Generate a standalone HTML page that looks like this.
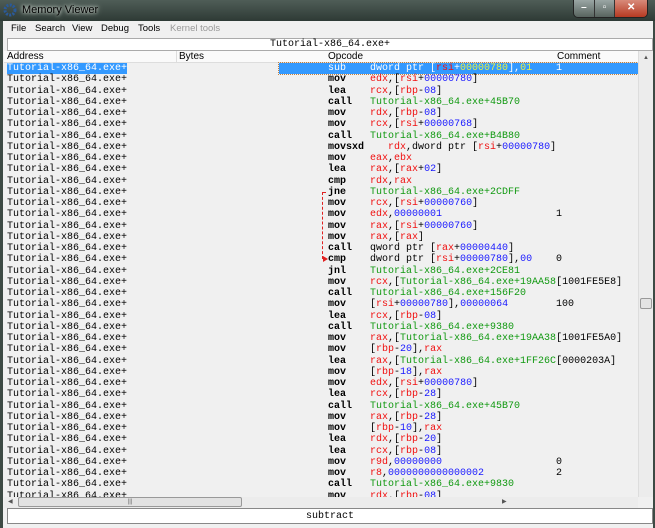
<!DOCTYPE html>
<html><head><meta charset="utf-8"><style>
*{margin:0;padding:0;box-sizing:border-box}
body{width:655px;height:528px;overflow:hidden;background:#3d4a44;font-family:"Liberation Sans",sans-serif;position:relative}
.title{position:absolute;left:0;top:0;width:655px;height:21px;background:linear-gradient(#4f5d57,#2e3a35);}
.title .t{position:absolute;left:22px;top:4px;font-size:11px;color:#000;text-shadow:0 0 6px #cfd8d0,0 0 3px #e8efe8}
.btns{position:absolute;left:573px;top:0;width:75px;height:18px;border:1px solid #222;border-top:none;border-radius:0 0 5px 5px;display:flex;overflow:hidden}
.btns div{flex:1;background:linear-gradient(#9aa6a4,#58645f);border-right:1px solid #333;color:#fff;font-size:10px;text-align:center;line-height:16px;font-weight:bold}
.btns div.x{flex:1.6;background:linear-gradient(#d88a7a,#b63a22);border:none}
.win{position:absolute;left:3px;top:21px;width:650px;height:507px;background:#f0f0f0}
.menu{position:absolute;left:0;top:0;width:650px;height:16px;background:#f0f0f0;font-size:9.5px;line-height:16px}
.menu span{position:absolute;top:0}
.tb{position:absolute;left:4px;top:17px;width:646px;height:13px;background:#fff;border:1px solid #aaa;font:10px "Liberation Mono",monospace;text-align:center;line-height:12px}
.list{position:absolute;left:1px;top:30px;width:634px;height:446px;background:#f0f0f0;overflow:hidden;font:10px/11.25px "Liberation Mono",monospace}
.hdr{position:absolute;left:0;top:0;width:634px;height:12px;background:#fafafa;border-bottom:1px solid #ddd;font-family:"Liberation Sans",sans-serif;font-size:10px;line-height:11px}
.hdr span{position:absolute;top:0}
.row{position:absolute;left:0;height:11.25px;width:634px;white-space:pre}
.a{position:absolute;left:3px}
.m{position:absolute;left:324px;font-weight:bold}
.o{position:absolute;left:366px}
.c{position:absolute;left:552px}
.r{color:#f01010}.n{color:#1818ff}.g{color:#119911}
.sel .a{background:#3399ff;color:#fff}
.selbar{position:absolute;left:275px;top:0;width:359px;height:11px;background:#3399ff;outline:1px dotted #c08040}
.sel .m,.sel .o,.sel .c{color:#fff}
.sel .r{color:#f01010}.sel .y{color:#e8f040}
.vs{position:absolute;left:635px;top:30px;width:15px;height:446px;background:#ececec;border-left:1px solid #ddd}
.hs{position:absolute;left:1px;top:476px;width:634px;height:11px;background:#ececec}
.bot{position:absolute;left:4px;top:487px;width:646px;height:16px;background:#fff;border:1px solid #888;font:10px "Liberation Mono",monospace;text-align:center;line-height:15px}
</style></head><body>
<div class="title"><svg style="position:absolute;left:3px;top:3px" width="14" height="14" viewBox="0 0 14 14"><circle cx="7" cy="7" r="5" fill="none" stroke="#2a5a9a" stroke-width="3" stroke-dasharray="2 1.3"/></svg><span class="t">Memory Viewer</span>
<div class="btns"><div>–</div><div>▫</div><div class="x">✕</div></div></div>
<div class="win">
<div class="menu"><span style="left:8px">File</span><span style="left:32px">Search</span><span style="left:69px">View</span><span style="left:98px">Debug</span><span style="left:135px">Tools</span><span style="left:167px;color:#999">Kernel tools</span></div>
<div class="tb">Tutorial-x86_64.exe+</div>
<div class="list">
<div class="hdr"><span style="left:3px">Address</span><span style="left:175px">Bytes</span><span style="left:172px;top:0;width:1px;height:12px;background:#ddd"></span><span style="left:324px">Opcode</span><span style="left:553px">Comment</span></div>
<div class="row sel" style="top:12px"><div class="selbar"></div><span class="a">Tutorial-x86_64.exe+</span><span class="m" style="font-weight:normal">sub</span><span class="o">dword ptr [<span class="r">rsi</span>+<span class="y">00000780</span>],<span class="y">01</span></span><span class="c">1</span></div>
<div class="row" style="top:23.25px"><span class="a">Tutorial-x86_64.exe+</span><span class="m">mov</span><span class="o"><span class="r">edx</span>,[<span class="r">rsi</span>+<span class="n">00000780</span>]</span></div>
<div class="row" style="top:34.5px"><span class="a">Tutorial-x86_64.exe+</span><span class="m">lea</span><span class="o"><span class="r">rcx</span>,[<span class="r">rbp</span>-<span class="n">08</span>]</span></div>
<div class="row" style="top:45.75px"><span class="a">Tutorial-x86_64.exe+</span><span class="m">call</span><span class="o g">Tutorial-x86_64.exe+45B70</span></div>
<div class="row" style="top:57px"><span class="a">Tutorial-x86_64.exe+</span><span class="m">mov</span><span class="o"><span class="r">rdx</span>,[<span class="r">rbp</span>-<span class="n">08</span>]</span></div>
<div class="row" style="top:68.25px"><span class="a">Tutorial-x86_64.exe+</span><span class="m">mov</span><span class="o"><span class="r">rcx</span>,[<span class="r">rsi</span>+<span class="n">00000768</span>]</span></div>
<div class="row" style="top:79.5px"><span class="a">Tutorial-x86_64.exe+</span><span class="m">call</span><span class="o g">Tutorial-x86_64.exe+B4B80</span></div>
<div class="row" style="top:90.75px"><span class="a">Tutorial-x86_64.exe+</span><span class="m">movsxd</span><span class="o" style="left:384px"><span class="r">rdx</span>,dword ptr [<span class="r">rsi</span>+<span class="n">00000780</span>]</span></div>
<div class="row" style="top:102px"><span class="a">Tutorial-x86_64.exe+</span><span class="m">mov</span><span class="o"><span class="r">eax</span>,<span class="r">ebx</span></span></div>
<div class="row" style="top:113.25px"><span class="a">Tutorial-x86_64.exe+</span><span class="m">lea</span><span class="o"><span class="r">rax</span>,[<span class="r">rax</span>+<span class="n">02</span>]</span></div>
<div class="row" style="top:124.5px"><span class="a">Tutorial-x86_64.exe+</span><span class="m">cmp</span><span class="o"><span class="r">rdx</span>,<span class="r">rax</span></span></div>
<div class="row" style="top:135.75px"><span class="a">Tutorial-x86_64.exe+</span><span class="m">jne</span><span class="o g">Tutorial-x86_64.exe+2CDFF</span></div>
<div class="row" style="top:147px"><span class="a">Tutorial-x86_64.exe+</span><span class="m">mov</span><span class="o"><span class="r">rcx</span>,[<span class="r">rsi</span>+<span class="n">00000760</span>]</span></div>
<div class="row" style="top:158.25px"><span class="a">Tutorial-x86_64.exe+</span><span class="m">mov</span><span class="o"><span class="r">edx</span>,<span class="n">00000001</span></span><span class="c">1</span></div>
<div class="row" style="top:169.5px"><span class="a">Tutorial-x86_64.exe+</span><span class="m">mov</span><span class="o"><span class="r">rax</span>,[<span class="r">rsi</span>+<span class="n">00000760</span>]</span></div>
<div class="row" style="top:180.75px"><span class="a">Tutorial-x86_64.exe+</span><span class="m">mov</span><span class="o"><span class="r">rax</span>,[<span class="r">rax</span>]</span></div>
<div class="row" style="top:192px"><span class="a">Tutorial-x86_64.exe+</span><span class="m">call</span><span class="o">qword ptr [<span class="r">rax</span>+<span class="n">00000440</span>]</span></div>
<div class="row" style="top:203.25px"><span class="a">Tutorial-x86_64.exe+</span><span class="m">cmp</span><span class="o">dword ptr [<span class="r">rsi</span>+<span class="n">00000780</span>],<span class="n">00</span></span><span class="c">0</span></div>
<div class="row" style="top:214.5px"><span class="a">Tutorial-x86_64.exe+</span><span class="m">jnl</span><span class="o g">Tutorial-x86_64.exe+2CE81</span></div>
<div class="row" style="top:225.75px"><span class="a">Tutorial-x86_64.exe+</span><span class="m">mov</span><span class="o"><span class="r">rcx</span>,[<span class="g">Tutorial-x86_64.exe+19AA58</span>[1001FE5E8]</span></div>
<div class="row" style="top:237px"><span class="a">Tutorial-x86_64.exe+</span><span class="m">call</span><span class="o g">Tutorial-x86_64.exe+156F20</span></div>
<div class="row" style="top:248.25px"><span class="a">Tutorial-x86_64.exe+</span><span class="m">mov</span><span class="o">[<span class="r">rsi</span>+<span class="n">00000780</span>],<span class="n">00000064</span></span><span class="c">100</span></div>
<div class="row" style="top:259.5px"><span class="a">Tutorial-x86_64.exe+</span><span class="m">lea</span><span class="o"><span class="r">rcx</span>,[<span class="r">rbp</span>-<span class="n">08</span>]</span></div>
<div class="row" style="top:270.75px"><span class="a">Tutorial-x86_64.exe+</span><span class="m">call</span><span class="o g">Tutorial-x86_64.exe+9380</span></div>
<div class="row" style="top:282px"><span class="a">Tutorial-x86_64.exe+</span><span class="m">mov</span><span class="o"><span class="r">rax</span>,[<span class="g">Tutorial-x86_64.exe+19AA38</span>[1001FE5A0]</span></div>
<div class="row" style="top:293.25px"><span class="a">Tutorial-x86_64.exe+</span><span class="m">mov</span><span class="o">[<span class="r">rbp</span>-<span class="n">20</span>],<span class="r">rax</span></span></div>
<div class="row" style="top:304.5px"><span class="a">Tutorial-x86_64.exe+</span><span class="m">lea</span><span class="o"><span class="r">rax</span>,[<span class="g">Tutorial-x86_64.exe+1FF26C</span>[0000203A]</span></div>
<div class="row" style="top:315.75px"><span class="a">Tutorial-x86_64.exe+</span><span class="m">mov</span><span class="o">[<span class="r">rbp</span>-<span class="n">18</span>],<span class="r">rax</span></span></div>
<div class="row" style="top:327px"><span class="a">Tutorial-x86_64.exe+</span><span class="m">mov</span><span class="o"><span class="r">edx</span>,[<span class="r">rsi</span>+<span class="n">00000780</span>]</span></div>
<div class="row" style="top:338.25px"><span class="a">Tutorial-x86_64.exe+</span><span class="m">lea</span><span class="o"><span class="r">rcx</span>,[<span class="r">rbp</span>-<span class="n">28</span>]</span></div>
<div class="row" style="top:349.5px"><span class="a">Tutorial-x86_64.exe+</span><span class="m">call</span><span class="o g">Tutorial-x86_64.exe+45B70</span></div>
<div class="row" style="top:360.75px"><span class="a">Tutorial-x86_64.exe+</span><span class="m">mov</span><span class="o"><span class="r">rax</span>,[<span class="r">rbp</span>-<span class="n">28</span>]</span></div>
<div class="row" style="top:372px"><span class="a">Tutorial-x86_64.exe+</span><span class="m">mov</span><span class="o">[<span class="r">rbp</span>-<span class="n">10</span>],<span class="r">rax</span></span></div>
<div class="row" style="top:383.25px"><span class="a">Tutorial-x86_64.exe+</span><span class="m">lea</span><span class="o"><span class="r">rdx</span>,[<span class="r">rbp</span>-<span class="n">20</span>]</span></div>
<div class="row" style="top:394.5px"><span class="a">Tutorial-x86_64.exe+</span><span class="m">lea</span><span class="o"><span class="r">rcx</span>,[<span class="r">rbp</span>-<span class="n">08</span>]</span></div>
<div class="row" style="top:405.75px"><span class="a">Tutorial-x86_64.exe+</span><span class="m">mov</span><span class="o"><span class="r">r9d</span>,<span class="n">00000000</span></span><span class="c">0</span></div>
<div class="row" style="top:417px"><span class="a">Tutorial-x86_64.exe+</span><span class="m">mov</span><span class="o"><span class="r">r8</span>,<span class="n">0000000000000002</span></span><span class="c">2</span></div>
<div class="row" style="top:428.25px"><span class="a">Tutorial-x86_64.exe+</span><span class="m">call</span><span class="o g">Tutorial-x86_64.exe+9830</span></div>
<div class="row" style="top:439.5px"><span class="a">Tutorial-x86_64.exe+</span><span class="m">mov</span><span class="o"><span class="r">rdx</span>,[<span class="r">rbp</span>-<span class="n">08</span>]</span></div>
<div style="position:absolute;left:318px;top:141px;width:4px;height:67px;border-left:1px dashed #e02020;border-top:1px dashed #e02020"></div>
<div style="position:absolute;left:319px;top:205px;width:0;height:0;border-left:5px solid #e02020;border-top:3px solid transparent;border-bottom:3px solid transparent"></div>
</div>
<div class="vs"><div style="position:absolute;left:4px;top:4px;font-size:6px;color:#555">▲</div><div style="position:absolute;left:1px;top:247px;width:12px;height:11px;background:#e4e4e4;border:1px solid #999;border-radius:2px"></div></div>
<div class="hs"><div style="position:absolute;left:4px;top:0;font-size:6px;color:#555;line-height:11px">◀</div><div style="position:absolute;left:14px;top:0;width:224px;height:10px;background:#e2e2e2;border:1px solid #999;border-radius:2px;font-size:6px;text-align:center;line-height:8px;color:#666">|||</div><div style="position:absolute;left:498px;top:0;font-size:6px;color:#555;line-height:11px">▶</div></div>
<div class="bot">subtract</div>
</div>
</body></html>
